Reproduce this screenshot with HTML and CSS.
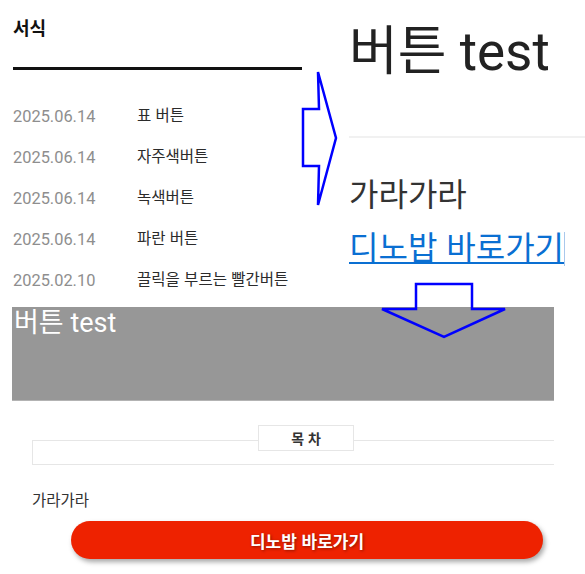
FILE: index.html
```html
<!DOCTYPE html>
<html lang="ko">
<head>
    <meta charset="UTF-8">
    <meta name="viewport" content="width=device-width, initial-scale=1.0">
    <title>버튼 test</title>
    <link rel="stylesheet" href="styles.css">
</head>
<body>
    <div class="page">
        <div class="top">
            <!-- 서식 list -->
            <section class="forms">
                <h3 class="forms-title">서식</h3>
                <ul class="forms-list">
                    <li><span class="date">2025.06.14</span><span class="name">표 버튼</span></li>
                    <li><span class="date">2025.06.14</span><span class="name">자주색버튼</span></li>
                    <li><span class="date">2025.06.14</span><span class="name">녹색버튼</span></li>
                    <li><span class="date">2025.06.14</span><span class="name">파란 버튼</span></li>
                    <li><span class="date">2025.02.10</span><span class="name">끌릭을 부르는 빨간버튼</span></li>
                </ul>
            </section>

            <!-- Post preview -->
            <section class="post">
                <h1 class="post-title">버튼 test</h1>
                <hr class="post-rule">
                <p class="post-text">가라가라</p>
                <div class="post-link-row">
                    <a class="post-link" href="#">디노밥 바로가기</a><span class="caret"></span>
                </div>
            </section>
        </div>

        <!-- Rendered header -->
        <div class="banner">
            <h2 class="banner-title">버튼 test</h2>
        </div>

        <!-- Rendered body -->
        <div class="article">
            <div class="toc">
                <div class="toc-label">목 차</div>
            </div>
            <p class="article-text">가라가라</p>
            <a class="cta" href="#">디노밥 바로가기</a>
        </div>

        <svg class="arrows" viewBox="0 0 585 574" width="585" height="574">
            <polygon points="303,109 319,109 318,72 336,138 318,205 319,166 303,166" />
            <polygon points="416,284 472,284 472,309 505,309 444,337 382,309 416,309" />
        </svg>
    </div>
</body>
</html>
```

FILE: styles.css
```css
* {
    margin: 0;
    padding: 0;
    box-sizing: border-box;
}

body {
    font-family: Roboto, "Noto Sans CJK KR", sans-serif;
    background: #ffffff;
    color: #222222;
    overflow: hidden;
}

.page {
    position: relative;
    width: 585px;
    height: 574px;
    overflow: hidden;
}

.top {
    display: grid;
    grid-template-columns: 320px 1fr;
    height: 307px;
}

/* left: 서식 list */
.forms {
    padding: 14px 0 0 13px;
}

.forms-title {
    font-family: "Noto Sans CJK KR", sans-serif;
    font-size: 18px;
    font-weight: 700;
    line-height: 26px;
    color: #111111;
    width: 289px;
    padding-bottom: 27px;
    border-bottom: 3px solid #111111;
}

.forms-list {
    list-style: none;
    margin-top: 26px;
}

.forms-list li {
    display: flex;
    align-items: center;
    height: 41px;
}

.date {
    width: 124px;
    font-size: 16.4px;
    color: #8e8e8e;
}

.name {
    font-family: "Noto Sans CJK KR", sans-serif;
    font-size: 15.5px;
    color: #2b2b2b;
    margin-top: -6px;
}

/* right: post preview */
.post {
    padding: 16px 0 0 29px;
}

.post-title {
    font-size: 53px;
    font-weight: 400;
    line-height: 72px;
    color: #222222;
    white-space: nowrap;
}

.post-rule {
    border: none;
    border-top: 2px solid #f1f1f1;
    margin-top: 48px;
}

.post-text {
    font-family: "Noto Sans CJK KR", sans-serif;
    font-size: 32px;
    line-height: 44px;
    color: #333333;
    margin-top: 32px;
}

.post-link-row {
    margin-top: 9px;
    line-height: 44px;
    white-space: nowrap;
}

.post-link {
    font-family: "Noto Sans CJK KR", sans-serif;
    font-size: 32px;
    color: #0a6fd2;
    text-decoration: underline;
    text-decoration-thickness: 2px;
    text-underline-offset: 3px;
}

.caret {
    display: inline-block;
    width: 1px;
    height: 34px;
    background: #a9c8ec;
    vertical-align: -7px;
}

/* gray header */
.banner {
    margin: 0 31px 0 12px;
    height: 94px;
    background: #979797;
    border-bottom: 1px solid #b3b3b3;
}

.banner-title {
    font-size: 27px;
    font-weight: 400;
    line-height: 32px;
    color: #ffffff;
    padding-left: 2px;
}

/* article */
.article {
    margin: 39px 31px 0 32px;
}

.toc {
    height: 25px;
    border: 1px solid #e6e6e6;
    border-right: none;
    margin-top: 1px;
}

.toc-label {
    width: 96px;
    height: 26px;
    margin: -16px 0 0 225px;
    border: 1px solid #e6e6e6;
    background: #ffffff;
    text-align: center;
    font-family: "Noto Sans CJK KR", sans-serif;
    font-size: 14px;
    font-weight: 700;
    line-height: 24px;
    color: #333333;
}

.article-text {
    font-family: "Noto Sans CJK KR", sans-serif;
    font-size: 15.5px;
    line-height: 20px;
    color: #333333;
    margin-top: 24px;
}

.cta {
    display: flex;
    justify-content: center;
    align-items: center;
    width: 472px;
    height: 38px;
    margin: 12px 0 14px 39px;
    border-radius: 19px;
    background: #ee2200;
    box-shadow: 2px 3px 5px rgba(0, 0, 0, 0.35);
    font-family: "Noto Sans CJK KR", sans-serif;
    font-size: 17px;
    font-weight: 700;
    color: #ffffff;
    text-decoration: none;
    text-shadow: 1px 1px 3px rgba(0, 0, 0, 0.4);
}

/* blue annotation arrows */
.arrows {
    position: absolute;
    top: 0;
    left: 0;
    pointer-events: none;
}

.arrows polygon {
    fill: none;
    stroke: #0000ff;
    stroke-width: 2.5;
}
```
